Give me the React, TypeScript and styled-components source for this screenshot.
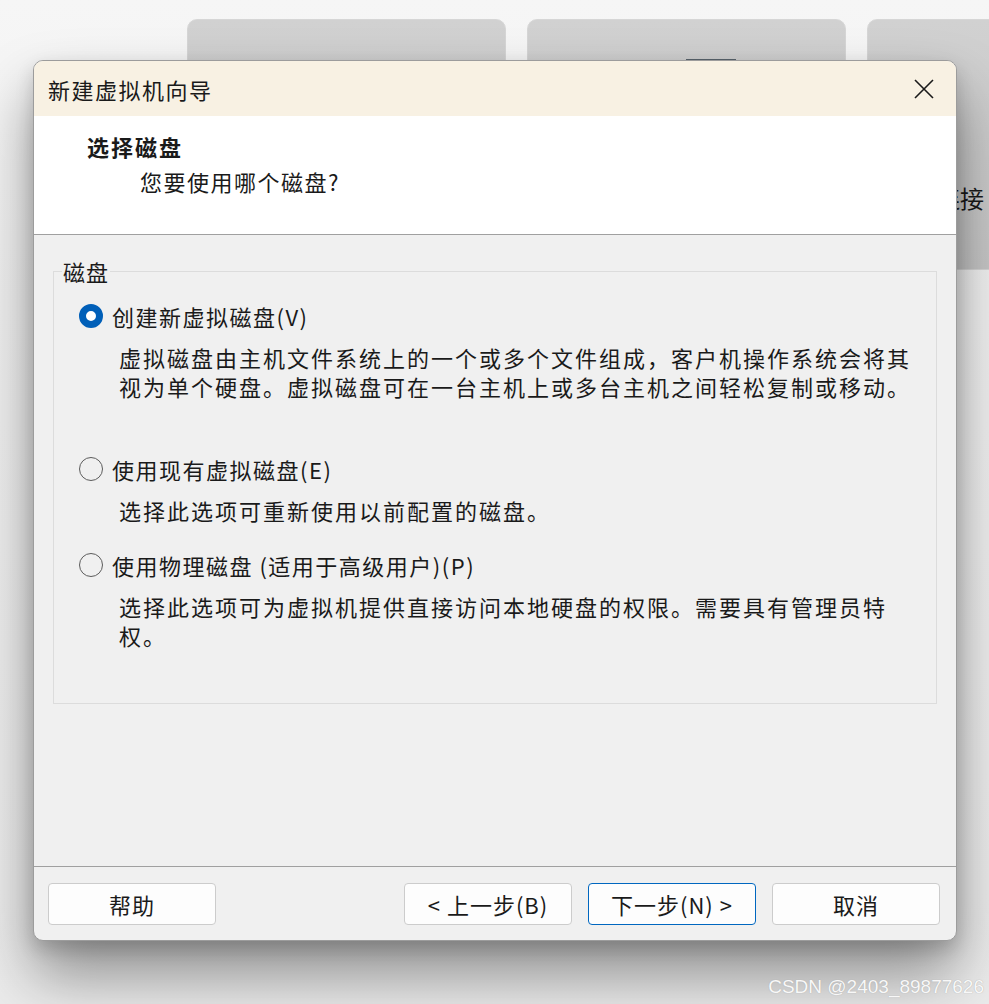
import React from 'react'
import styled, { createGlobalStyle } from 'styled-components'

const GlobalStyle = createGlobalStyle`
  html, body {
    margin: 0;
    padding: 0;
    background: #f3f3f3;
  }
  body {
    font-family: "Noto Sans CJK SC", "Noto Sans", sans-serif;
    color: #1a1a1a;
  }
`

const options = [
  {
    label: '创建新虚拟磁盘(V)',
    desc: '虚拟磁盘由主机文件系统上的一个或多个文件组成，客户机操作系统会将其视为单个硬盘。虚拟磁盘可在一台主机上或多台主机之间轻松复制或移动。',
    checked: true,
    after: 53,
  },
  {
    label: '使用现有虚拟磁盘(E)',
    desc: '选择此选项可重新使用以前配置的磁盘。',
    checked: false,
    after: 25,
  },
  {
    label: '使用物理磁盘 (适用于高级用户)(P)',
    desc: '选择此选项可为虚拟机提供直接访问本地硬盘的权限。需要具有管理员特权。',
    checked: false,
    after: 0,
  },
]

const App = () => {
  return (
    <Screen>
      <GlobalStyle />

      <CardRow>
        <BgCard />
        <BgCard>
          <CardBar />
        </BgCard>
        <BgCard>
          <CardText>连接</CardText>
        </BgCard>
      </CardRow>

      <Dialog>
        <TitleBar>
          <Title>新建虚拟机向导</Title>
          <CloseButton>
            <svg width="22" height="22" viewBox="0 0 22 22">
              <path d="M2 2 L20 20 M20 2 L2 20" stroke="#1a1a1a" strokeWidth="1.6" fill="none" />
            </svg>
          </CloseButton>
        </TitleBar>

        <Header>
          <HeaderTitle>选择磁盘</HeaderTitle>
          <HeaderSub>您要使用哪个磁盘?</HeaderSub>
        </Header>

        <Body>
          <Group>
            <Legend>磁盘</Legend>
            {options.map((o) => (
              <Option key={o.label} $after={o.after}>
                <RadioRow>
                  <Radio $checked={o.checked} />
                  <RadioLabel>{o.label}</RadioLabel>
                </RadioRow>
                <Desc>{o.desc}</Desc>
              </Option>
            ))}
          </Group>
        </Body>

        <Footer>
          <Button>帮助</Button>
          <Spacer />
          <Button>&lt; 上一步(B)</Button>
          <Button $primary>下一步(N) &gt;</Button>
          <Button>取消</Button>
        </Footer>
      </Dialog>

      <Watermark>CSDN @2403_89877626</Watermark>
    </Screen>
  )
}

export default App

const Screen = styled.div`
  position: relative;
  width: 989px;
  height: 1004px;
  overflow: hidden;
  background: linear-gradient(180deg, #f6f6f6 0%, #f1f1f1 30%, #ebebeb 100%);
`
const CardRow = styled.div`
  display: flex;
  gap: 21px;
  padding: 19px 0 0 187px;
`
const BgCard = styled.div`
  position: relative;
  flex: 0 0 319px;
  height: 251px;
  border-radius: 10px;
  border: 1px solid #d6d6d6;
  box-sizing: border-box;
  background: linear-gradient(180deg, #d1d1d1 0%, #c6c6c6 100%);
`
const CardBar = styled.div`
  position: absolute;
  left: 158px;
  top: 39px;
  width: 50px;
  height: 3px;
  background: #5a646c;
`
const CardText = styled.div`
  position: absolute;
  left: 68px;
  top: 160px;
  font-size: 24px;
  color: #1a1a1a;
`
const Dialog = styled.div`
  position: absolute;
  left: 33px;
  top: 60px;
  width: 924px;
  height: 881px;
  box-sizing: border-box;
  border: 1px solid #9c9c9c;
  border-radius: 10px;
  overflow: hidden;
  background: #f0f0f0;
  display: flex;
  flex-direction: column;
  box-shadow: 0 34px 60px rgba(0, 0, 0, 0.4), 0 8px 18px rgba(0, 0, 0, 0.16);
`
const TitleBar = styled.div`
  height: 55px;
  flex: 0 0 55px;
  background: #f8f1e3;
  display: flex;
  align-items: center;
  justify-content: space-between;
  padding: 0 21px 0 14px;
`
const Title = styled.div`
  font-size: 22px;
  letter-spacing: 1.5px;
  color: #1a1a1a;
`
const CloseButton = styled.div`
  display: flex;
  align-items: center;
`
const Header = styled.div`
  flex: 0 0 119px;
  box-sizing: border-box;
  background: #ffffff;
  border-bottom: 1px solid #a0a0a0;
  padding: 15px 0 0 53px;
`
const HeaderTitle = styled.div`
  font-size: 22px;
  font-weight: 700;
  line-height: 30px;
  letter-spacing: 2px;
`
const HeaderSub = styled.div`
  font-size: 22px;
  line-height: 30px;
  margin: 5px 0 0 53px;
  letter-spacing: 1.5px;
`
const Body = styled.div`
  flex: 1;
  padding: 22px 19px 0 19px;
`
const Group = styled.fieldset`
  margin: 0;
  padding: 16px 0 0 0;
  height: 447px;
  box-sizing: border-box;
  border: 1px solid #dcdcdc;
  min-width: 0;
`
const Legend = styled.legend`
  font-size: 22px;
  line-height: 28px;
  padding: 0 1px;
  margin-left: 8px;
  letter-spacing: 1px;
  color: #1a1a1a;
`
const Option = styled.div<{ $after: number }>`
  margin: 0 0 ${(p) => p.$after}px 25px;
`
const RadioRow = styled.div`
  display: flex;
  align-items: center;
  height: 30px;
`
const Radio = styled.span<{ $checked?: boolean }>`
  width: 24px;
  height: 24px;
  box-sizing: border-box;
  border-radius: 50%;
  flex: 0 0 24px;
  margin-right: 9px;
  border: ${(p) => (p.$checked ? '7px solid #005fb8' : '1.5px solid #5c5c5c')};
  background: ${(p) => (p.$checked ? '#ffffff' : 'transparent')};
`
const RadioLabel = styled.span`
  font-size: 22px;
  letter-spacing: 1.5px;
  color: #1a1a1a;
`
const Desc = styled.div`
  margin: 12px 0 0 40px;
  width: 805px;
  font-size: 22px;
  line-height: 29px;
  letter-spacing: 2px;
  color: #1a1a1a;
`
const Footer = styled.div`
  flex: 0 0 74px;
  box-sizing: border-box;
  border-top: 1px solid #a0a0a0;
  display: flex;
  align-items: flex-start;
  gap: 16px;
  padding: 16px 16px 0 14px;
`
const Spacer = styled.div`
  flex: 1;
`
const Button = styled.div<{ $primary?: boolean }>`
  width: 168px;
  height: 42px;
  box-sizing: border-box;
  display: flex;
  align-items: center;
  justify-content: center;
  border-radius: 4px;
  background: #fdfdfd;
  border: 1px solid ${(p) => (p.$primary ? '#0067c0' : '#cccccc')};
  font-size: 22px;
  letter-spacing: 1px;
  color: #1a1a1a;
`
const Watermark = styled.div`
  position: absolute;
  right: 5px;
  bottom: 6px;
  font-family: "Liberation Sans", Arial, sans-serif;
  font-size: 19px;
  color: #f8f8f8;
  text-shadow: 0 0 1px #a0a0a0;
`
